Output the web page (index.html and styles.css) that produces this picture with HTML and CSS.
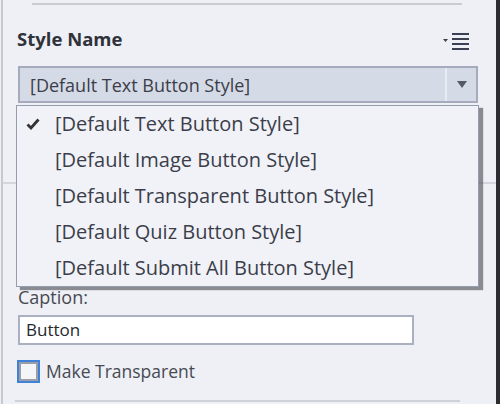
FILE: index.html
```html
<!DOCTYPE html>
<html>
<head>
    <meta name="viewport" content="width=device-width, initial-scale=1.0">
    <link rel="stylesheet" href="styles.css">
</head>
<body>
    <div id="panel">
        <div class="topRule"></div>

        <div class="styleHeader">
            <div class="sectionTitle">Style Name</div>
            <svg class="menuIcon" width="28" height="20" viewBox="0 0 28 20">
                <path d="M0 7 L5 7 L2.5 10 Z" fill="#3a4052"/>
                <rect x="9" y="1" width="17" height="2" fill="#3a4052"/>
                <rect x="9" y="6" width="17" height="2" fill="#3a4052"/>
                <rect x="9" y="11" width="17" height="2" fill="#3a4052"/>
                <rect x="9" y="16" width="17" height="2" fill="#3a4052"/>
            </svg>
        </div>

        <div class="select">
            <div class="selectValue">[Default Text Button Style]</div>
            <div class="selectArrow"></div>
        </div>

        <div class="sectionRule"></div>

        <div class="fieldLabel">Caption:</div>
        <div class="textInput">Button</div>

        <div class="checkRow">
            <div class="checkBox"></div>
            <span>Make Transparent</span>
        </div>

        <div class="bottomRule"></div>

        <!-- open dropdown list, drawn over the panel -->
        <div id="styleList">
            <div class="option selected">
                <svg class="tick" width="14" height="12" viewBox="0 0 14 12">
                    <path d="M1.5 6.5 L5 10 L12.5 1.5" fill="none" stroke="#333" stroke-width="2.8"/>
                </svg>
                [Default Text Button Style]
            </div>
            <div class="option">[Default Image Button Style]</div>
            <div class="option">[Default Transparent Button Style]</div>
            <div class="option">[Default Quiz Button Style]</div>
            <div class="option">[Default Submit All Button Style]</div>
        </div>
    </div>
</body>
</html>
```

FILE: styles.css
```css
html, body {
    margin: 0;
    padding: 0;
    width: 500px;
    height: 404px;
    overflow: hidden;
    background: #eef0f5;
    font-family: 'Open Sans', 'Noto Sans', sans-serif;
    color: #3c3f48;
}

#panel {
    position: relative;
    box-sizing: border-box;
    height: 404px;
    margin-left: 1px;
    border-left: 2px solid #c6c9d0;
    border-right: 4px solid #2c2d31;
    display: flex;
    flex-direction: column;
}

.topRule {
    height: 2px;
    background: #c9ccd3;
    margin: 3px 34px 0 29px;
}

.styleHeader {
    display: flex;
    align-items: center;
    justify-content: space-between;
    margin: 22px 25px 0 14px;
    height: 24px;
}

.sectionTitle {
    font-size: 18.5px;
    line-height: 24px;
    font-weight: bold;
    color: #2f323a;
}

.menuIcon {
    margin-top: 6px;
}

.select {
    display: flex;
    align-items: center;
    box-sizing: border-box;
    height: 37px;
    margin: 15px 18px 0 15px;
    background: #d5dae7;
    border: 2px solid #a5abbc;
}

.selectValue {
    flex: 1;
    padding-left: 10px;
    font-size: 18px;
    line-height: 24px;
    color: #3b3e48;
}

.selectArrow {
    width: 29px;
    height: 100%;
    border-left: 2px solid #e8ebf2;
    display: flex;
    align-items: center;
    justify-content: center;
}

.selectArrow::after {
    content: '';
    border-left: 5px solid transparent;
    border-right: 5px solid transparent;
    border-top: 7px solid #555a66;
}

.sectionRule {
    height: 2px;
    background: #d3d6dc;
    margin-top: 79px;
}

.fieldLabel {
    margin: 103px 0 0 15px;
    font-size: 18px;
    line-height: 20px;
    color: #474a53;
}

.textInput {
    box-sizing: border-box;
    width: 396px;
    height: 30px;
    margin: 8px 0 0 15px;
    padding: 2px 6px;
    background: #fff;
    border: 2px solid #aab0c0;
    font-size: 17px;
    line-height: 22px;
    color: #25272d;
}

.checkRow {
    display: flex;
    align-items: center;
    gap: 6px;
    margin: 15px 0 0 14px;
    font-size: 17.5px;
    line-height: 23px;
    color: #474a53;
}

.checkBox {
    box-sizing: border-box;
    width: 23px;
    height: 23px;
    border: 2px solid #3f82d8;
    background: #f4f5f7;
    box-shadow: inset 0 0 0 2px #9a9ea8;
}

.bottomRule {
    height: 2px;
    background: #cfd2d8;
    margin: 17px 36px 0 12px;
}

#styleList {
    position: absolute;
    left: 13px;
    top: 105px;
    width: 463px;
    box-sizing: border-box;
    background: #f1f2f7;
    border: 1px solid #959cae;
    box-shadow: 4px 3px 1px rgba(70, 72, 80, 0.6);
}

.option {
    position: relative;
    height: 36px;
    line-height: 36px;
    padding-left: 38px;
    font-size: 20px;
    color: #3b3e4a;
    white-space: nowrap;
}

.tick {
    position: absolute;
    left: 9px;
    top: 12px;
}
```
